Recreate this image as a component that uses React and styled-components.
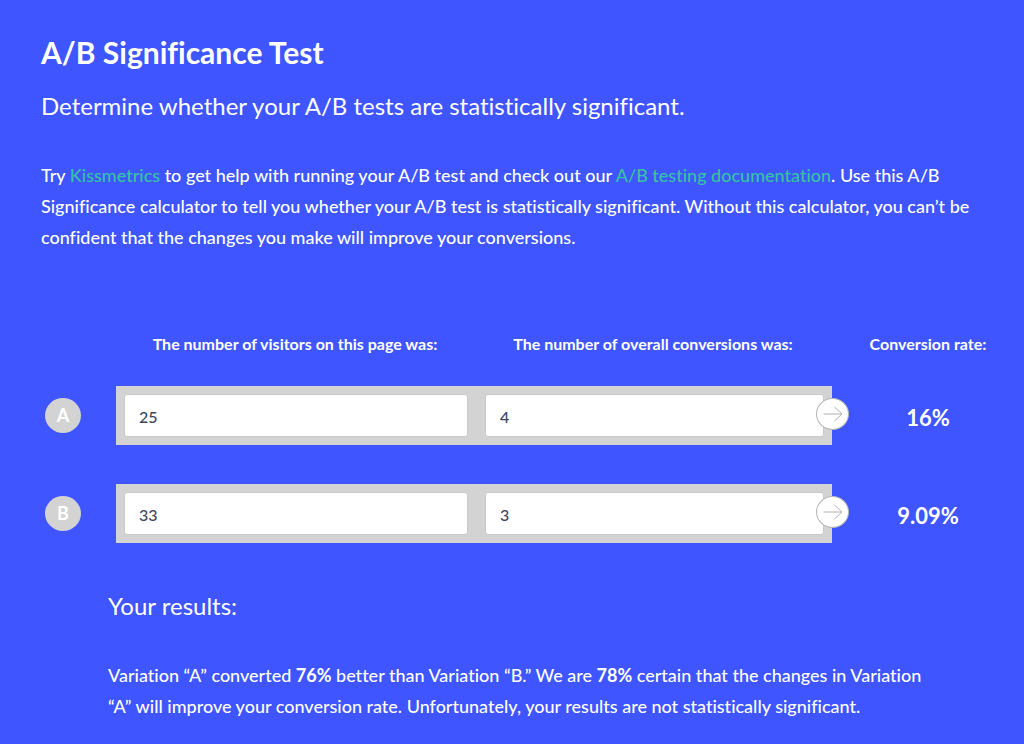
import React, { useState } from 'react';
import styled, { createGlobalStyle } from 'styled-components';

const GlobalStyle = createGlobalStyle`
  * {
    box-sizing: border-box;
  }
  body {
    margin: 0;
    background: #3e55ff;
    color: #fff;
    font-family: 'Lato', sans-serif;
    font-size: 18px;
    line-height: 31px;
    font-variant-ligatures: none;
  }
`;

const Page = styled.main`
  padding: 31px 0 22px 41px;
`;

const Title = styled.h1`
  margin: 0;
  font-size: 30px;
  font-weight: 700;
  line-height: 42px;
`;

const Subtitle = styled.h2`
  margin: ${({ $top }) => $top}px 0 0;
  font-size: 24px;
  font-weight: 400;
  line-height: 32px;
`;

const Text = styled.p`
  margin: 38px 48px 0 0;
  font-weight: 500;
`;

const Link = styled.a`
  color: #36c3a5;
  text-decoration: none;
`;

const Form = styled.form`
  margin-top: 75px;
`;

const Row = styled.div`
  display: grid;
  grid-template-columns: 75px minmax(0, 1fr) 192px;
  align-items: center;
  margin-top: ${({ $top }) => $top}px;
`;

const Heads = styled.div`
  display: grid;
  grid-template-columns: 1fr 1fr;
  grid-column: 2;
`;

const Head = styled.label`
  font-size: 16px;
  font-weight: 700;
  text-align: center;
`;

const Badge = styled.span`
  display: flex;
  align-items: center;
  justify-content: center;
  width: 36px;
  height: 35px;
  margin-left: 4px;
  border-radius: 50%;
  background: #d3d3d3;
  font-size: 18px;
  font-weight: 700;
`;

const Panel = styled.div`
  position: relative;
  display: grid;
  grid-template-columns: 344fr 339fr;
  gap: 17px;
  padding: 8px;
  background: #d3d3d3;
`;

const Field = styled.input`
  width: 100%;
  height: 43px;
  padding: 2px 14px 0;
  border: 1px solid #c9c9c9;
  border-radius: 3px;
  background: #fff;
  color: #40455f;
  font: 500 16px 'Lato', sans-serif;
`;

const Go = styled.button`
  position: absolute;
  top: 12px;
  right: -17px;
  display: flex;
  align-items: center;
  justify-content: center;
  width: 33px;
  height: 32px;
  padding: 0;
  border: 1px solid #b5b5b5;
  border-radius: 50%;
  background: #fff;
  cursor: pointer;
`;

const Rate = styled.output`
  padding-top: 4px;
  font-size: 22px;
  font-weight: 700;
  text-align: center;
`;

const Results = styled.section`
  margin: 0 48px 0 67px;
`;

const Arrow = () => (
  <svg width="20" height="16" viewBox="0 0 20 16" fill="none" stroke="#b0b0b0" aria-hidden="true">
    <path d="M0.5 8H19M11.5 1L19 8L11.5 15" />
  </svg>
);

const getRate = ({ visitors, conversions }) => {
  const rate = (conversions / visitors) * 100;
  return Number.isFinite(rate) ? `${+rate.toFixed(2)}%` : '0%';
};

const App = () => {
  const [rows, setRows] = useState([
    { id: 'A', visitors: '25', conversions: '4' },
    { id: 'B', visitors: '33', conversions: '3' },
  ]);

  const update = (id, key) => (e) => {
    const { value } = e.target;
    setRows(rows.map((row) => (row.id === id ? { ...row, [key]: value } : row)));
  };

  return (
    <>
      <GlobalStyle />
      <Page>
        <Title>A/B Significance Test</Title>
        <Subtitle $top={17}>
          Determine whether your A/B tests are statistically significant.
        </Subtitle>
        <Text>
          Try <Link href="#kissmetrics">Kissmetrics</Link> to get help with running your A/B test
          and check out our <Link href="#docs">A/B testing documentation</Link>. Use this A/B
          Significance calculator to tell you whether your A/B test is statistically significant.
          Without this calculator, you can’t be confident that the changes you make will improve
          your conversions.
        </Text>

        <Form onSubmit={(e) => e.preventDefault()}>
          <Row $top={0}>
            <Heads>
              <Head id="visitors" htmlFor="visitors-A">
                The number of visitors on this page was:
              </Head>
              <Head id="conversions" htmlFor="conversions-A">
                The number of overall conversions was:
              </Head>
            </Heads>
            <Head as="span">Conversion rate:</Head>
          </Row>
          {rows.map((row, index) => (
            <Row key={row.id} $top={index ? 39 : 27}>
              <Badge id={row.id}>{row.id}</Badge>
              <Panel>
                <Field
                  id={`visitors-${row.id}`}
                  aria-labelledby={`${row.id} visitors`}
                  value={row.visitors}
                  onChange={update(row.id, 'visitors')}
                />
                <Field
                  id={`conversions-${row.id}`}
                  aria-labelledby={`${row.id} conversions`}
                  value={row.conversions}
                  onChange={update(row.id, 'conversions')}
                />
                <Go type="submit" aria-label={`Calculate ${row.id}`}>
                  <Arrow />
                </Go>
              </Panel>
              <Rate>{getRate(row)}</Rate>
            </Row>
          ))}
        </Form>

        <Results>
          <Subtitle $top={47}>Your results:</Subtitle>
          <Text>
            Variation “A” converted <b>76%</b> better than Variation “B.” We are <b>78%</b> certain
            that the changes in Variation “A” will improve your conversion rate. Unfortunately, your
            results are not statistically significant.
          </Text>
        </Results>
      </Page>
    </>
  );
};

export default App;
